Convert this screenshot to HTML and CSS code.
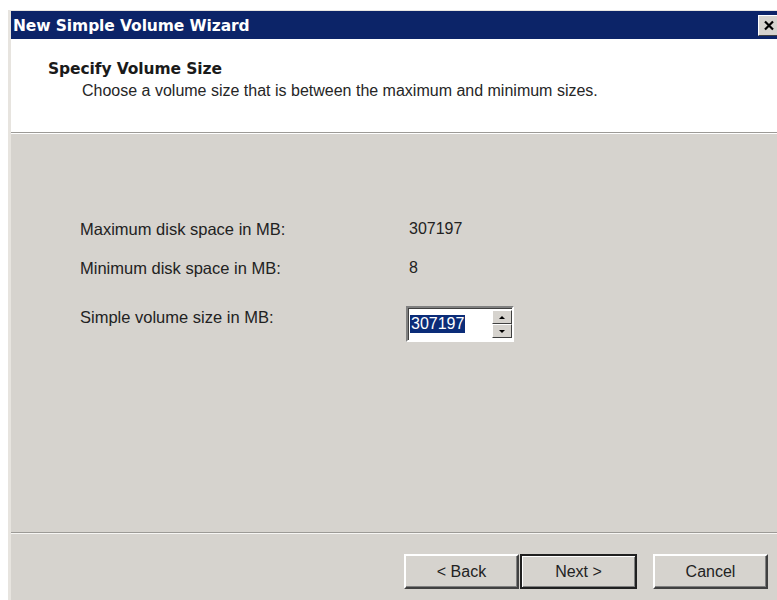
FILE: index.html
```html
<!DOCTYPE html>
<html>
<head>
<meta charset="utf-8">
<title>New Simple Volume Wizard</title>
<link rel="stylesheet" href="styles.css">
</head>
<body>
<div class="window">
  <div class="titlebar">
    <span class="title">New Simple Volume Wizard</span>
    <span class="close-btn">
      <svg width="12" height="11" viewBox="0 0 12 11"><path d="M2 1.5 L10 9.5 M10 1.5 L2 9.5" stroke="#000" stroke-width="2.2"/></svg>
    </span>
  </div>
  <div class="header">
    <div class="heading">Specify Volume Size</div>
    <div class="subheading">Choose a volume size that is between the maximum and minimum sizes.</div>
  </div>
  <div class="content">
    <div class="form">
      <div class="label">Maximum disk space in MB:</div>
      <div class="value">307197</div>
      <div class="label">Minimum disk space in MB:</div>
      <div class="value">8</div>
      <div class="label label-input">Simple volume size in MB:</div>
      <div class="spinbox">
        <span class="spin-text"><span class="selected">307197</span></span>
        <span class="spin-buttons">
          <span class="spin-btn"><span class="arrow up"></span></span>
          <span class="spin-btn"><span class="arrow down"></span></span>
        </span>
      </div>
    </div>
  </div>
  <div class="footer">
    <button class="btn">&lt; Back</button>
    <button class="btn btn-default">Next &gt;</button>
    <button class="btn btn-cancel">Cancel</button>
  </div>
</div>
</body>
</html>
```

FILE: styles.css
```css
html, body {
  margin: 0;
  padding: 0;
  background: #ffffff;
  overflow: hidden;
}

body {
  width: 777px;
  height: 600px;
  font-family: "Liberation Sans", Arial, sans-serif;
  font-size: 16px;
  color: #222222;
}

.window {
  margin: 10px 0 0 8px;
  width: 774px;
  height: 590px;
  box-sizing: border-box;
  border-top: 1px solid #e8e6e2;
  border-left: 3px solid #e7e4df;
  display: flex;
  flex-direction: column;
  background: #d6d3ce;
}

.titlebar {
  height: 28px;
  flex: none;
  background: #0c2468;
  display: flex;
  align-items: center;
  justify-content: space-between;
  padding-left: 2px;
}

.title {
  color: #ffffff;
  font-family: "DejaVu Sans", Verdana, sans-serif;
  font-weight: bold;
  font-size: 15.5px;
  letter-spacing: -0.1px;
  padding-top: 1px;
}

.close-btn {
  width: 22px;
  height: 21px;
  margin-right: 2px;
  box-sizing: border-box;
  background: #d6d3ce;
  border-top: 1px solid #ffffff;
  border-left: 1px solid #ffffff;
  border-right: 1px solid #404040;
  border-bottom: 1px solid #404040;
  display: flex;
  align-items: center;
  justify-content: center;
}

.header {
  height: 94px;
  flex: none;
  box-sizing: border-box;
  background: #ffffff;
  padding: 20px 0 0 37px;
  border-bottom: 1px solid #9c9a96;
  box-shadow: 0 1px 0 #ffffff;
}

.heading {
  font-family: "DejaVu Sans", Verdana, sans-serif;
  font-weight: bold;
  font-size: 15.5px;
  letter-spacing: -0.1px;
  line-height: 20px;
  color: #1a1a1a;
}

.subheading {
  margin: 2px 0 0 34px;
  line-height: 20px;
  font-size: 16px;
  color: #262626;
}

.content {
  flex: 1;
  padding: 86px 0 0 69px;
  border-bottom: 1px solid #9c9a96;
  box-shadow: 0 1px 0 #f7f6f4;
}

.form {
  display: grid;
  grid-template-columns: 326px auto;
  row-gap: 19px;
  align-items: start;
}

.label,
.value {
  line-height: 20px;
}

.label {
  font-size: 16.5px;
}

.value {
  padding-left: 3px;
}

.label-input {
  margin-top: 10px;
}

.spinbox {
  margin-top: 9px;
  width: 108px;
  height: 36px;
  box-sizing: border-box;
  background: #ffffff;
  border-top: 2px solid #808080;
  border-left: 2px solid #808080;
  border-right: 2px solid #ffffff;
  border-bottom: 2px solid #ffffff;
  box-shadow: inset 1px 1px 0 #404040;
  display: flex;
  align-items: center;
  justify-content: space-between;
  padding: 0 0 0 2px;
}

.selected {
  background: #0b2c78;
  color: #ffffff;
  line-height: 18px;
  display: inline-block;
  padding: 0 1px;
}

.spin-buttons {
  display: flex;
  flex-direction: column;
  align-self: stretch;
  padding: 2px 0;
}

.spin-btn {
  flex: 1;
  width: 20px;
  box-sizing: border-box;
  background: #d6d3ce;
  border-top: 1px solid #ffffff;
  border-left: 1px solid #ffffff;
  border-right: 1px solid #404040;
  border-bottom: 1px solid #404040;
  display: flex;
  align-items: center;
  justify-content: center;
}

.arrow {
  width: 0;
  height: 0;
  border-left: 3px solid transparent;
  border-right: 3px solid transparent;
}

.arrow.up {
  border-bottom: 3px solid #000000;
}

.arrow.down {
  border-top: 3px solid #000000;
}

.footer {
  height: 67px;
  flex: none;
  display: flex;
  align-items: flex-start;
  padding: 21px 0 0 393px;
  box-sizing: border-box;
}

.btn {
  width: 115px;
  height: 35px;
  box-sizing: border-box;
  font-family: "Liberation Sans", Arial, sans-serif;
  font-size: 16px;
  color: #222222;
  background: #d6d3ce;
  border-top: 2px solid #ffffff;
  border-left: 2px solid #ffffff;
  border-right: 2px solid #404040;
  border-bottom: 2px solid #404040;
  box-shadow: inset -1px -1px 0 #808080;
  padding: 0;
  margin: 0;
}

.btn-default {
  width: 117px;
  margin-left: 1px;
  border: 2px solid #202020;
  box-shadow: inset 1px 1px 0 #ffffff, inset -1px -1px 0 #808080;
}

.btn-cancel {
  margin-left: 16px;
}
```
